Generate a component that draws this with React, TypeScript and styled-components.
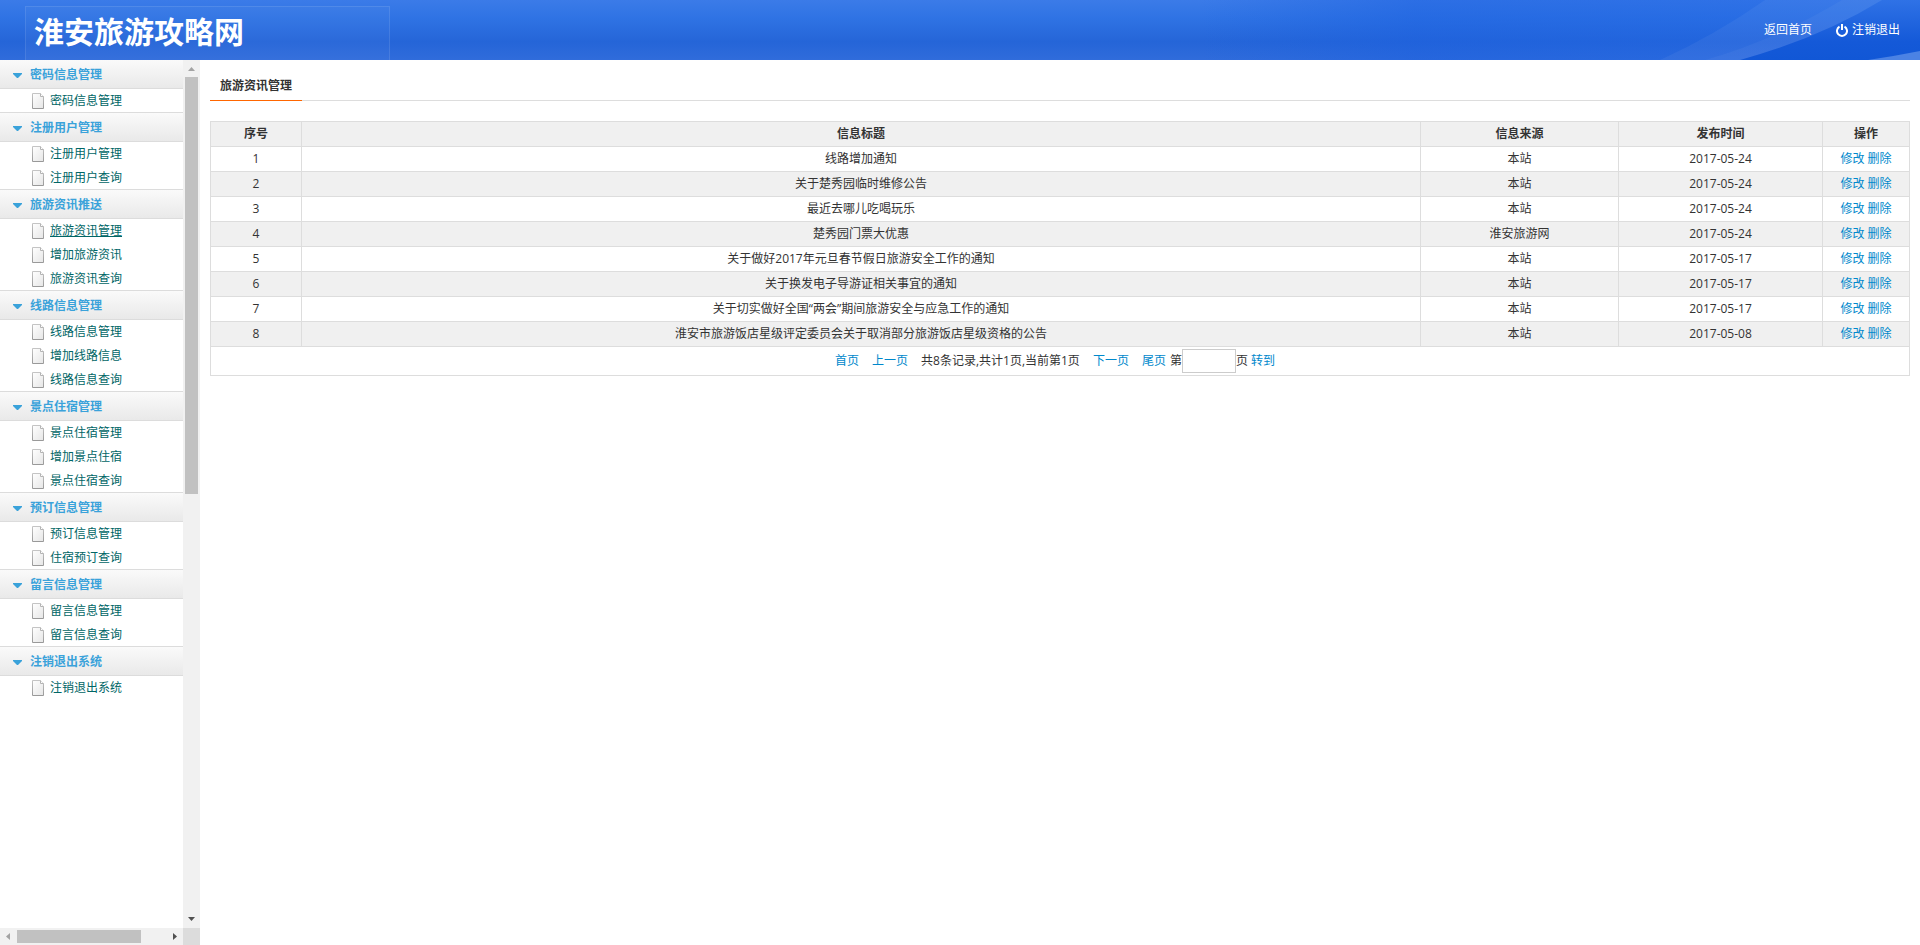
import React from 'react';
import styled, { createGlobalStyle } from 'styled-components';

const GlobalStyle = createGlobalStyle`
  *, *::before, *::after { box-sizing: border-box; }
  html, body, #root { height: 100%; }
  body {
    margin: 0;
    background: #fff;
    color: #333;
    font: 12px/20px "Open Sans", "Noto Sans CJK SC", sans-serif;
  }
  a { color: #08c; text-decoration: none; }
  a:hover { text-decoration: underline; }
  ul { margin: 0; padding: 0; list-style: none; }
`;

const Page = styled.div`
  display: flex;
  flex-direction: column;
  height: 100%;
`;

const Header = styled.header`
  position: relative;
  flex: none;
  display: flex;
  align-items: center;
  justify-content: space-between;
  height: 60px;
  padding: 0 20px 0 34px;
  overflow: hidden;
  background: linear-gradient(#3b7be8 0, #2f73e4 18px, #2565d8 42px, #306cdb 60px);
`;

const Swoosh = styled.svg`
  position: absolute;
  top: 0;
  right: 0;
`;

const LogoPanel = styled.div`
  position: absolute;
  top: 6px;
  left: 25px;
  width: 365px;
  height: 60px;
  border: 1px solid rgba(255, 255, 255, 0.1);
  background: rgba(255, 255, 255, 0.03);
`;

const Brand = styled.h1`
  position: relative;
  margin: 0;
  padding-top: 4px;
  color: #fff;
  font-size: 30px;
  line-height: 40px;
  font-weight: bold;
`;

const TopLinks = styled.nav`
  position: relative;
  display: flex;
  gap: 24px;
`;

const TopLink = styled.a`
  display: flex;
  align-items: center;
  gap: 4px;
  color: #fff;
`;

const Body = styled.div`
  flex: 1;
  display: flex;
  min-height: 0;
`;

const Sidebar = styled.aside`
  flex: none;
  display: grid;
  grid-template: minmax(0, 1fr) 17px / minmax(0, 1fr) 17px;
  width: 200px;
`;

const Menu = styled.nav`
  overflow: hidden;
`;

const GroupTitle = styled.h2`
  display: flex;
  align-items: center;
  gap: 8px;
  height: 30px;
  margin: -1px 0 0;
  padding: 2px 0 0 13px;
  border: solid #dcdcdc;
  border-width: 1px 0;
  background: linear-gradient(#fafafa, #e9e9e9);
  color: #3aa2da;
  font-size: 12px;
  line-height: 20px;
`;

const MenuItem = styled.li`
  display: flex;
  align-items: center;
  gap: 6px;
  height: 24px;
  padding-left: 32px;
`;

const MenuLink = styled.a<{ $current?: boolean }>`
  color: #066;
  text-decoration: ${(p) => (p.$current ? 'underline' : 'none')};
`;

const Track = styled.div<{ $vertical?: boolean }>`
  display: flex;
  flex-direction: ${(p) => (p.$vertical ? 'column' : 'row')};
  align-items: center;
  background: #f1f1f1;
`;

const Thumb = styled.div<{ $vertical?: boolean }>`
  flex: none;
  width: ${(p) => (p.$vertical ? '13px' : '124px')};
  height: ${(p) => (p.$vertical ? '417px' : '13px')};
  margin: ${(p) => (p.$vertical ? '0 0 auto' : '0 auto 0 0')};
  background: #c1c1c1;
`;

const Corner = styled.div`
  background: #dcdcdc;
`;

const Main = styled.main`
  flex: 1;
  min-width: 0;
  padding: 10px;
`;

const TabBar = styled.div`
  display: flex;
  height: 31px;
  margin-bottom: 20px;
  border-bottom: 1px solid #ddd;
`;

const Tab = styled.h2`
  height: 31px;
  margin: 0;
  padding: 6px 10px 0;
  border-bottom: 1px solid #ff6600;
  font-size: 12px;
  line-height: 20px;
`;

const Table = styled.table`
  width: 100%;
  border-collapse: collapse;
  table-layout: fixed;
  text-align: center;
`;

const Column = styled.col<{ $width?: string }>`
  width: ${(p) => p.$width || 'auto'};
`;

const Row = styled.tr<{ $shaded?: boolean }>`
  height: 25px;
  background: ${(p) => (p.$shaded ? '#f0f0f0' : '#fff')};
`;

const Cell = styled.td`
  padding: 2px;
  border: 1px solid #ddd;
`;

const HeadCell = styled(Cell).attrs({ as: 'th' })``;

const PagerCell = styled(Cell)`
  height: 29px;
`;

const Pager = styled.form`
  display: flex;
  align-items: center;
  justify-content: center;
  padding-right: 10px;
`;

const PagerLink = styled.a`
  margin-right: 13px;
`;

const Summary = styled.span`
  margin-right: 13px;
`;

const PageInput = styled.input`
  width: 54px;
  height: 24px;
  padding: 2px 4px;
  border: 1px solid #ccc;
  background: #fff;
  color: #333;
  font: inherit;
`;

const GoButton = styled.button`
  margin-left: 3px;
  padding: 0;
  border: 0;
  background: none;
  color: #08c;
  font: inherit;
  cursor: pointer;
`;

const LastLink = styled.a`
  margin-right: 4px;
`;

const groups: { title: string; items: string[] }[] = [
  { title: '密码信息管理', items: ['密码信息管理'] },
  { title: '注册用户管理', items: ['注册用户管理', '注册用户查询'] },
  { title: '旅游资讯推送', items: ['旅游资讯管理', '增加旅游资讯', '旅游资讯查询'] },
  { title: '线路信息管理', items: ['线路信息管理', '增加线路信息', '线路信息查询'] },
  { title: '景点住宿管理', items: ['景点住宿管理', '增加景点住宿', '景点住宿查询'] },
  { title: '预订信息管理', items: ['预订信息管理', '住宿预订查询'] },
  { title: '留言信息管理', items: ['留言信息管理', '留言信息查询'] },
  { title: '注销退出系统', items: ['注销退出系统'] },
];

const rows: [string, string, string][] = [
  ['线路增加通知', '本站', '2017-05-24'],
  ['关于楚秀园临时维修公告', '本站', '2017-05-24'],
  ['最近去哪儿吃喝玩乐', '本站', '2017-05-24'],
  ['楚秀园门票大优惠', '淮安旅游网', '2017-05-24'],
  ['关于做好2017年元旦春节假日旅游安全工作的通知', '本站', '2017-05-17'],
  ['关于换发电子导游证相关事宜的通知', '本站', '2017-05-17'],
  ['关于切实做好全国“两会”期间旅游安全与应急工作的通知', '本站', '2017-05-17'],
  ['淮安市旅游饭店星级评定委员会关于取消部分旅游饭店星级资格的公告', '本站', '2017-05-08'],
];

const directions = {
  up: 'M5 11h7l-3.5-4z',
  down: 'M5 6h7l-3.5 4z',
  left: 'M10 5v7l-4-3.5z',
  right: 'M7 5v7l4-3.5z',
};

const ScrollArrow = ({ to, color }: { to: keyof typeof directions; color: string }) => (
  <svg width="17" height="17" viewBox="0 0 17 17" aria-hidden="true">
    <path d={directions[to]} fill={color} />
  </svg>
);

const Caret = () => (
  <svg width="9" height="5" viewBox="0 0 9 5" aria-hidden="true">
    <path d="M0 0h9v1L5 5H4L0 1z" fill="#3aa2da" />
  </svg>
);

const FileIcon = () => (
  <svg width="12" height="16" viewBox="0 0 12 16" aria-hidden="true">
    <defs>
      <linearGradient id="paper" x1="0" y1="0" x2="1" y2="1">
        <stop offset="0" stopColor="#fff" />
        <stop offset="1" stopColor="#e6e6e6" />
      </linearGradient>
      <linearGradient id="edge" x1="0" y1="0" x2="0" y2="1">
        <stop offset="0" stopColor="#c4c4c4" />
        <stop offset="1" stopColor="#999" />
      </linearGradient>
    </defs>
    <path d="M.5.5h8l3 3v12H.5z" fill="url(#paper)" stroke="url(#edge)" />
    <path d="M8.5.5v3h3" fill="#fff" stroke="#b4b4b4" />
  </svg>
);

const PowerIcon = () => (
  <svg width="12" height="13" viewBox="0 0 12 13" fill="none" stroke="#fff" strokeWidth="2" aria-hidden="true">
    <path d="M3.5 2.6a5 5 0 1 0 5 0M6 0v6" />
  </svg>
);

export default function App() {
  return (
    <>
      <GlobalStyle />
      <Page>
        <Header>
          <Swoosh width="720" height="60" viewBox="0 0 720 60" aria-hidden="true">
            <defs>
              <linearGradient id="deep" x1="0" y1="0" x2="0" y2="1">
                <stop offset="0" stopColor="#2f72e6" />
                <stop offset=".7" stopColor="#1459d8" />
                <stop offset="1" stopColor="#1157d6" />
              </linearGradient>
              <linearGradient id="fade" x1="0" y1="0" x2="1" y2="0">
                <stop offset="0" stopColor="#1a5fe0" stopOpacity="0" />
                <stop offset=".3" stopColor="#1a5fe0" stopOpacity=".45" />
                <stop offset="1" stopColor="#1f66e6" stopOpacity=".4" />
              </linearGradient>
            </defs>
            <path d="M0 0h720v60H0z" fill="url(#fade)" />
            <path d="M565 0Q515 35 460 60h260V0z" fill="#fff" fillOpacity=".05" />
            <path d="M642 0Q575 40 505 60h215V0z" fill="#fff" fillOpacity=".04" />
            <path d="M682 0Q620 38 540 60h180V0z" fill="url(#deep)" />
            <path d="M720 51Q695 56 668 60h52z" fill="#4b82e4" />
          </Swoosh>
          <LogoPanel />
          <Brand>淮安旅游攻略网</Brand>
          <TopLinks aria-label="账户">
            <TopLink href="#home">返回首页</TopLink>
            <TopLink href="#logout"><PowerIcon />注销退出</TopLink>
          </TopLinks>
        </Header>
        <Body>
          <Sidebar>
            <Menu aria-label="主菜单">
              {groups.map((group) => (
                <section key={group.title}>
                  <GroupTitle><Caret />{group.title}</GroupTitle>
                  <ul>
                    {group.items.map((item) => (
                      <MenuItem key={item}>
                        <FileIcon />
                        <MenuLink href="#list" $current={item === '旅游资讯管理'}>{item}</MenuLink>
                      </MenuItem>
                    ))}
                  </ul>
                </section>
              ))}
            </Menu>
            <Track $vertical>
              <ScrollArrow to="up" color="#a3a3a3" />
              <Thumb $vertical />
              <ScrollArrow to="down" color="#505050" />
            </Track>
            <Track>
              <ScrollArrow to="left" color="#a3a3a3" />
              <Thumb />
              <ScrollArrow to="right" color="#505050" />
            </Track>
            <Corner />
          </Sidebar>
          <Main>
            <TabBar><Tab>旅游资讯管理</Tab></TabBar>
            <Table>
              <colgroup>
                <Column $width="91px" />
                <Column />
                <Column $width="198px" />
                <Column $width="204px" />
                <Column $width="87px" />
              </colgroup>
              <thead>
                <Row $shaded>
                  <HeadCell>序号</HeadCell>
                  <HeadCell>信息标题</HeadCell>
                  <HeadCell>信息来源</HeadCell>
                  <HeadCell>发布时间</HeadCell>
                  <HeadCell>操作</HeadCell>
                </Row>
              </thead>
              <tbody>
                {rows.map(([title, source, date], i) => (
                  <Row key={title} $shaded={i % 2 === 1}>
                    <Cell>{i + 1}</Cell>
                    <Cell>{title}</Cell>
                    <Cell>{source}</Cell>
                    <Cell>{date}</Cell>
                    <Cell><a href="#edit">修改</a> <a href="#delete">删除</a></Cell>
                  </Row>
                ))}
                <tr>
                  <PagerCell colSpan={5}>
                    <Pager>
                      <PagerLink href="#first">首页</PagerLink>
                      <PagerLink href="#prev">上一页</PagerLink>
                      <Summary>共8条记录,共计1页,当前第1页</Summary>
                      <PagerLink href="#next">下一页</PagerLink>
                      <LastLink href="#last">尾页</LastLink>
                      <label htmlFor="page">第</label>
                      <PageInput id="page" type="text" aria-label="页码" />
                      页
                      <GoButton type="button">转到</GoButton>
                    </Pager>
                  </PagerCell>
                </tr>
              </tbody>
            </Table>
          </Main>
        </Body>
      </Page>
    </>
  );
}
